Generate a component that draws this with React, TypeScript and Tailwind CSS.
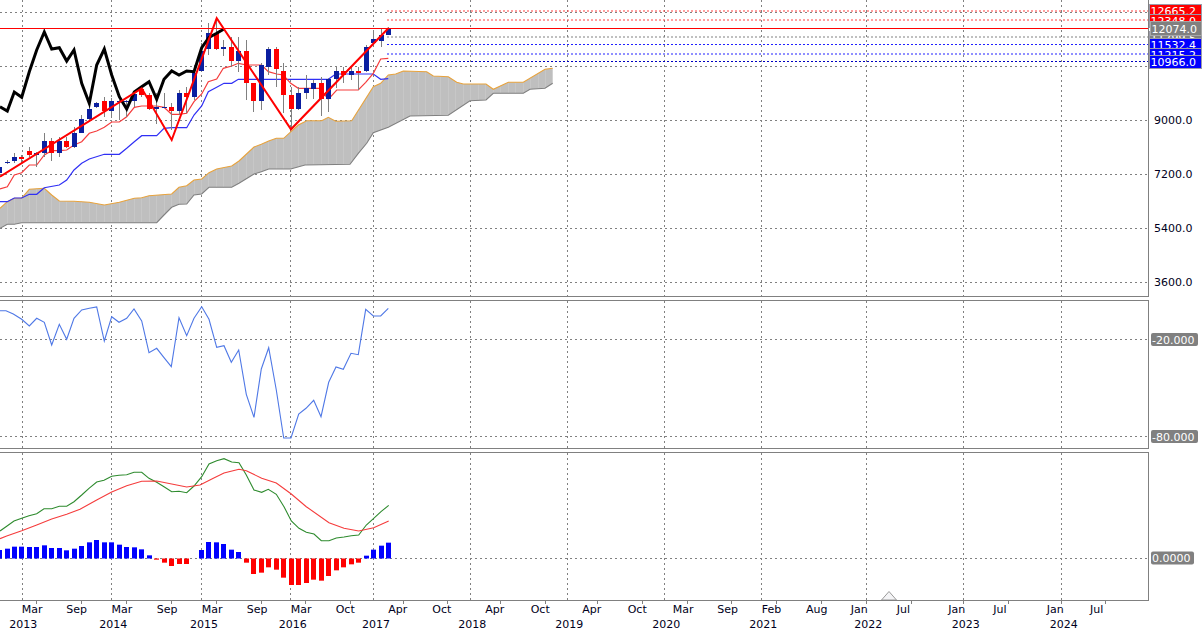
import React from 'react';

type Pt = [number, number];

// points were read off 3x crops, so everything is divided back by 3
const z = (pts: Pt[], dx = 0, dy = 0): string =>
  pts.map(([x, y]) => `${(x / 3 + dx).toFixed(1)},${(y / 3 + dy).toFixed(1)}`).join(' ');

const barX = (i: number) => 6.5 + i * 7.48;

const GRID_X = [22, 111.5, 201.5, 290.5, 373.5, 470.5, 567.5, 664.5, 761.5, 866.5, 963.5, 1061.5];
const GRID_Y = [12.5, 66.5, 120.5, 174.5, 228.5, 282.5];

const GRID = '#808080';
const BLUE_BODY = '#0a1ea0';

// [bar, bodyTop, bodyBottom, wickTop, wickBottom, up]
const CANDLES: [number, number, number, number, number, boolean][] = [
  [-1, 500, 520, 495, 525, true], [0, 486, 489, 480, 492, true], [1, 471, 483, 460, 490, true],
  [2, 471, 476, 465, 490, false], [3, 453, 464, 440, 470, false], [4, 459, 464, 455, 500, true],
  [5, 423, 459, 400, 470, true], [6, 423, 459, 415, 482, false], [7, 423, 459, 410, 470, true],
  [8, 423, 441, 410, 445, false], [9, 399, 441, 380, 445, true], [10, 357, 399, 345, 400, true],
  [11, 327, 357, 315, 365, true], [12, 309, 321, 305, 325, true], [13, 303, 333, 290, 350, false],
  [14, 303, 333, 295, 355, true], [15, 304, 306, 300, 360, true], [16, 303, 307, 300, 350, true],
  [17, 281, 303, 275, 320, true], [18, 267, 285, 260, 290, false], [19, 285, 327, 280, 330, false],
  [20, 321, 327, 280, 372, true], [21, 321, 324, 280, 325, true], [22, 321, 333, 310, 390, false],
  [23, 279, 333, 270, 345, true], [24, 279, 291, 260, 340, false], [25, 219, 291, 195, 300, true],
  [26, 153, 213, 130, 215, true], [27, 100, 147, 70, 165, true], [28, 100, 147, 60, 150, false],
  [29, 141, 147, 120, 168, true], [30, 141, 183, 110, 200, false], [31, 153, 183, 110, 215, true],
  [32, 153, 249, 120, 300, false], [33, 249, 303, 249, 335, false], [34, 195, 303, 190, 330, true],
  [35, 147, 201, 140, 225, true], [36, 147, 207, 140, 260, false], [37, 213, 285, 190, 340, false],
  [38, 285, 327, 260, 390, false], [39, 279, 327, 260, 330, true], [40, 265, 279, 225, 298, true],
  [41, 249, 267, 240, 297, true], [42, 249, 297, 230, 348, false], [43, 237, 297, 235, 335, true],
  [44, 213, 237, 200, 265, true], [45, 213, 225, 200, 250, false], [46, 213, 225, 200, 240, true],
  [47, 213, 219, 200, 270, false], [48, 141, 213, 135, 215, true], [49, 117, 129, 95, 130, true],
  [50, 105, 123, 85, 140, true], [51, 87, 105, 80, 105, true],
];

const CHIKOU: Pt[] = [[0, 320], [22, 333], [43, 276], [65, 292], [88, 215], [110, 150], [133, 96], [155, 147], [178, 143], [200, 183], [222, 150], [245, 250], [268, 310], [290, 195], [313, 147], [335, 225], [358, 290], [380, 327], [403, 276], [425, 260], [447, 245], [470, 298], [492, 238], [515, 213], [537, 225], [560, 213], [582, 215], [605, 143], [627, 112], [650, 100], [672, 87]];

const TENKAN: Pt[] = [[0, 567], [22, 560], [43, 525], [65, 518], [88, 495], [110, 495], [133, 465], [155, 452], [178, 452], [200, 450], [222, 435], [245, 425], [268, 400], [290, 393], [313, 382], [335, 366], [358, 366], [380, 350], [403, 322], [425, 318], [470, 318], [492, 322], [515, 343], [537, 343], [560, 340], [582, 305], [605, 282], [625, 245], [650, 237], [670, 205], [695, 198], [715, 190], [740, 195], [785, 195], [805, 215], [830, 222], [850, 225], [872, 250], [895, 265], [960, 265], [985, 298], [1010, 270], [1075, 270], [1097, 247], [1120, 220], [1142, 177], [1165, 175]];

const KIJUN: Pt[] = [[0, 605], [22, 605], [43, 594], [65, 594], [88, 583], [110, 583], [133, 563], [178, 555], [200, 540], [222, 510], [245, 490], [268, 477], [313, 463], [358, 463], [380, 445], [403, 425], [425, 407], [470, 407], [492, 385], [515, 383], [560, 383], [582, 345], [605, 318], [625, 275], [650, 262], [672, 250], [695, 250], [715, 238], [985, 238], [1007, 222], [1120, 222], [1142, 238], [1165, 236]];

const KUMO_TOP: Pt[] = [[0, 625], [22, 605], [43, 595], [65, 594], [88, 568], [133, 565], [155, 585], [178, 603], [222, 604], [268, 607], [313, 615], [358, 607], [403, 595], [425, 593], [447, 587], [515, 582], [537, 562], [560, 557], [582, 540], [605, 537], [627, 518], [650, 507], [695, 498], [717, 483], [762, 441], [784, 433], [806, 423], [829, 415], [851, 415], [873, 395], [895, 375], [920, 362], [965, 362], [985, 352], [1007, 364], [1055, 362], [1120, 260], [1142, 250], [1165, 225], [1187, 222], [1210, 213], [1280, 215], [1300, 228], [1345, 230], [1370, 247], [1390, 252], [1458, 252], [1480, 268], [1525, 247], [1570, 247], [1635, 208], [1658, 205]];

const KUMO_BOTTOM: Pt[] = [[1658, 250], [1635, 265], [1590, 268], [1570, 280], [1480, 280], [1458, 300], [1410, 302], [1345, 346], [1230, 348], [1165, 382], [1120, 398], [1100, 430], [1075, 460], [1050, 493], [915, 495], [872, 507], [806, 507], [784, 515], [762, 522], [717, 550], [695, 562], [627, 562], [605, 582], [582, 585], [560, 612], [537, 613], [515, 622], [492, 645], [470, 668], [65, 668], [43, 673], [22, 673], [0, 685]];

const ZIGZAG = '0,176.7 141.7,88.3 171.7,140 216.7,18.3 291,129.3 388.3,28.3';

const WPR: Pt[] = [[0, 62], [18, 62], [40, 72], [65, 88], [88, 108], [110, 85], [133, 97], [155, 165], [178, 103], [200, 148], [222, 85], [245, 60], [268, 55], [290, 51], [313, 153], [335, 80], [357, 97], [380, 85], [402, 57], [425, 93], [447, 188], [470, 175], [492, 203], [514, 230], [537, 83], [560, 137], [582, 85], [605, 50], [627, 88], [650, 172], [672, 167], [694, 217], [716, 180], [739, 313], [762, 382], [784, 237], [806, 173], [829, 300], [851, 444], [873, 444], [896, 372], [918, 355], [941, 331], [963, 380], [986, 277], [1008, 231], [1030, 238], [1053, 190], [1075, 194], [1097, 58], [1120, 78], [1142, 78], [1165, 55]];

const MACD_MAIN: Pt[] = [[0, 243], [18, 230], [42, 213], [65, 205], [87, 197], [110, 191], [132, 176], [155, 176], [178, 169], [200, 169], [222, 155], [245, 135], [267, 115], [290, 96], [312, 91], [335, 79], [357, 76], [380, 74], [402, 67], [425, 67], [447, 85], [470, 97], [492, 110], [515, 125], [537, 124], [560, 128], [582, 108], [605, 80], [627, 42], [650, 32], [672, 26], [695, 36], [717, 38], [739, 75], [762, 120], [785, 127], [805, 118], [829, 133], [852, 170], [874, 213], [897, 235], [919, 247], [942, 252], [964, 272], [987, 272], [1009, 264], [1032, 261], [1054, 257], [1076, 255], [1099, 225], [1121, 205], [1143, 185], [1166, 166]];

const MACD_SIGNAL: Pt[] = [[0, 266], [20, 258], [65, 242], [110, 225], [155, 207], [200, 193], [240, 178], [290, 150], [335, 126], [380, 107], [425, 94], [470, 93], [515, 102], [560, 111], [600, 105], [640, 85], [672, 69], [717, 58], [739, 62], [785, 85], [829, 99], [874, 132], [919, 170], [987, 218], [1032, 235], [1076, 243], [1121, 233], [1166, 213]];

// bar end in crop pixels, zero line sits at 325; index 0 is the bar cut by the left edge
const HIST = [300, 296, 290, 290, 291, 291, 286, 294, 294, 301, 296, 288, 277, 270, 277, 277, 284, 291, 292, 298, 316, 329, 338, 348, 342, 342, 325, 300, 276, 277, 282, 299, 306, 338, 372, 368, 352, 359, 383, 405, 405, 399, 389, 392, 378, 361, 352, 343, 338, 317, 299, 287, 278];

const MONTHS: [string, number, number][] = [
  ['Mar', 21.7, 36.5], ['Sep', 66.3, 81], ['Mar', 111.5, 126], ['Sep', 156.7, 171], ['Mar', 201.7, 216],
  ['Sep', 246.7, 261], ['Mar', 290.7, 305], ['Oct', 335.7, 350], ['Apr', 388.3, 403], ['Oct', 432.3, 447.5],
  ['Apr', 485.3, 500.5], ['Oct', 530.7, 545.5], ['Apr', 582.3, 597.5], ['Oct', 627.7, 642.5], ['Mar', 672.7, 687.5],
  ['Sep', 717.3, 731.5], ['Feb', 761.7, 776.5], ['Aug', 806, 821.5], ['Jan', 850.7, 866.5], ['Jul', 896.7, 911.5],
  ['Jan', 948.3, 963.5], ['Jul', 993.3, 1008.5], ['Jan', 1046.7, 1061.5], ['Jul', 1090, 1105.5],
];

const YEARS: [string, number][] = [
  ['2013', 9.3], ['2014', 99.3], ['2015', 190], ['2016', 278.7], ['2017', 362], ['2018', 458.3],
  ['2019', 555.3], ['2020', 652.3], ['2021', 749.3], ['2022', 854.3], ['2023', 951.7], ['2024', 1049.7],
];

const Grid: React.FC<{ ys: number[]; top: number; bottom: number }> = ({ ys, top, bottom }) => (
  <g stroke={GRID} strokeWidth={1} strokeDasharray="2 3" shapeRendering="crispEdges">
    {GRID_X.map((x) => <line key={x} x1={x} x2={x} y1={top} y2={bottom} />)}
    {ys.map((y) => <line key={y} x1={0} x2={1148} y1={y} y2={y} />)}
  </g>
);

// price axis tag, y is the top of the box in page pixels
const AxisTag: React.FC<{ y: number; fill: string; label: string; h?: number; x?: number; w?: number; stroke?: string }> = ({
  y, fill, label, h = 14, x = 0, w = 53, stroke = '#9a9aa8',
}) => (
  <g>
    <rect x={x + 0.5} y={y + 0.5} width={w - 1} height={h - 1} fill={fill} stroke={stroke} shapeRendering="crispEdges" />
    <text x={x + 1.5} y={y + h / 2 + 4} fill="#ffffff">{label}</text>
  </g>
);

const AxisText: React.FC<{ center: number; label: string }> = ({ center, label }) => (
  <text x={5} y={center + 4} fill="#000020">{label}</text>
);

const ValueTag: React.FC<{ center: number; w: number; label: string }> = ({ center, w, label }) => (
  <g>
    <rect x={2} y={center - 6.5} width={w} height={13} rx={2} fill="#808080" />
    <text x={3} y={center + 4} fill="#ffffff">{label}</text>
  </g>
);

const PricePanel = () => (
  <div className="flex h-[297px]">
    <div className="w-[1149px] border-r border-b border-[#808080]">
      <svg width={1148} height={296} viewBox="0 0 1148 296" className="block">
        <defs>
          <clipPath id="kumo">
            <polygon points={z(KUMO_TOP) + ' ' + z(KUMO_BOTTOM)} />
          </clipPath>
        </defs>
        <Grid ys={GRID_Y} top={0} bottom={296} />
        <polygon points={z(KUMO_TOP) + ' ' + z(KUMO_BOTTOM)} fill="#bfbfbf" />
        <g stroke="#c7c7c7" strokeWidth={1} clipPath="url(#kumo)" shapeRendering="crispEdges">
          {Array.from({ length: 74 }, (_, i) => {
            const x = Math.round(barX(i)) + 0.5;
            return <line key={i} x1={x} x2={x} y1={60} y2={232} />;
          })}
        </g>
        <polyline points={z(KUMO_TOP)} fill="none" stroke="#e8a33d" strokeWidth={1.1} />
        <polyline points={z(KUMO_BOTTOM)} fill="none" stroke="#808080" strokeWidth={1.1} />
        <polyline points={z(KIJUN)} fill="none" stroke="#3030f5" strokeWidth={1.2} />
        <polyline points={z(TENKAN)} fill="none" stroke="#f53c3c" strokeWidth={1.2} />
        {CANDLES.map(([i, t, b, wt, wb, up]) => {
          const x = Math.round(barX(i));
          return (
            <g key={i} shapeRendering="crispEdges">
              <line x1={x + 0.5} x2={x + 0.5} y1={wt / 3} y2={wb / 3} stroke="#808080" />
              <rect x={x - 2} y={t / 3} width={5} height={Math.max(b - t, 3) / 3} fill={up ? BLUE_BODY : '#ff0000'} />
            </g>
          );
        })}
        <polyline points={z(CHIKOU)} fill="none" stroke="#000000" strokeWidth={3} />
        <line x1={0} x2={1148} y1={28.5} y2={28.5} stroke="#ff0000" shapeRendering="crispEdges" />
        <polyline points={ZIGZAG} fill="none" stroke="#ff0000" strokeWidth={2} />
        <g strokeDasharray="2 2" strokeWidth={1}>
          <line x1={387} x2={1148} y1={11} y2={11} stroke="#ff4040" />
          <line x1={387} x2={1148} y1={20} y2={20} stroke="#ff4040" />
          <line x1={387} x2={1148} y1={37} y2={37} stroke="#808080" />
          <line x1={387} x2={1148} y1={44.5} y2={44.5} stroke="#2020ff" />
          <line x1={387} x2={1148} y1={54} y2={54} stroke="#2020ff" />
          <line x1={387} x2={1148} y1={61.5} y2={61.5} stroke="#0000c0" />
        </g>
      </svg>
    </div>
    <svg width={53} height={297} viewBox="0 0 53 297" className="block">
      <AxisTag y={4} fill="#ff0000" label="12665.2" />
      <AxisTag y={14} fill="#ff0000" label="12348.0" />
      <AxisTag y={31} fill="#808080" label="11799.5" />
      <AxisTag y={38} fill="#0000ff" label="11532.4" />
      <AxisTag y={48} fill="#0000ff" label="11215.2" />
      <AxisTag y={55} fill="#0000ff" label="10966.0" />
      <AxisTag y={21} x={1} w={52} h={15} fill="#808080" stroke="#a8a8a8" label="12074.0" />
      <AxisText center={120} label="9000.0" />
      <AxisText center={174} label="7200.0" />
      <AxisText center={228} label="5400.0" />
      <AxisText center={282} label="3600.0" />
    </svg>
  </div>
);

const WprPanel = () => (
  <div className="flex h-[149px] mt-[3px]">
    <div className="w-[1149px] border-r border-y border-[#808080]">
      <svg width={1148} height={147} viewBox="0 301 1148 147" className="block">
        <Grid ys={[339.5, 436.5]} top={301} bottom={448} />
        <polyline points={z(WPR, 0, 290)} fill="none" stroke="#4f78e6" strokeWidth={1.1} />
      </svg>
    </div>
    <svg width={53} height={149} viewBox="0 300 53 149" className="block">
      <ValueTag center={339.5} w={47} label="-20.000" />
      <ValueTag center={436.5} w={47} label="-80.000" />
    </svg>
  </div>
);

const MacdPanel = () => (
  <div className="flex h-[149px] mt-[3px]">
    <div className="w-[1149px] border-r border-y border-[#808080]">
      <svg width={1148} height={147} viewBox="0 453 1148 147" className="block">
        <Grid ys={[558.5]} top={453} bottom={600} />
        {HIST.map((y, i) => {
          const end = 450 + y / 3;
          const x = Math.round(barX(i - 1)) - 2;
          return y === 325 ? null : (
            <rect key={i} x={x} width={5} y={Math.min(end, 558.5)} height={Math.abs(end - 558.5)} fill={y < 325 ? '#0000ff' : '#ff0000'} />
          );
        })}
        <polyline points={z(MACD_MAIN, 0, 450)} fill="none" stroke="#2e8b2e" strokeWidth={1.1} />
        <polyline points={z(MACD_SIGNAL, 0, 450)} fill="none" stroke="#f53c3c" strokeWidth={1.1} />
        <polygon points="881.5,600 889,591.5 896.5,600" fill="#f4f4f6" stroke="#9a9a9a" strokeWidth={1} />
      </svg>
    </div>
    <svg width={53} height={149} viewBox="0 452 53 149" className="block">
      <ValueTag center={558} w={43} label="0.0000" />
    </svg>
  </div>
);

const TimeAxis = () => (
  <svg width={1202} height={32} viewBox="0 601 1202 32" className="block" fill="#000020">
    <g stroke="#808080" shapeRendering="crispEdges">
      {MONTHS.map(([, , tick]) => <line key={tick} x1={tick} x2={tick} y1={601} y2={604} />)}
    </g>
    {MONTHS.map(([label, x]) => <text key={x} x={x} y={613}>{label}</text>)}
    {YEARS.map(([label, x]) => <text key={label} x={x} y={628}>{label}</text>)}
  </svg>
);

export default function App() {
  return (
    <div className="w-[1202px] h-[633px] bg-white overflow-hidden font-['DejaVu_Sans',sans-serif] text-[11px] leading-none">
      <PricePanel />
      <WprPanel />
      <MacdPanel />
      <TimeAxis />
    </div>
  );
}
